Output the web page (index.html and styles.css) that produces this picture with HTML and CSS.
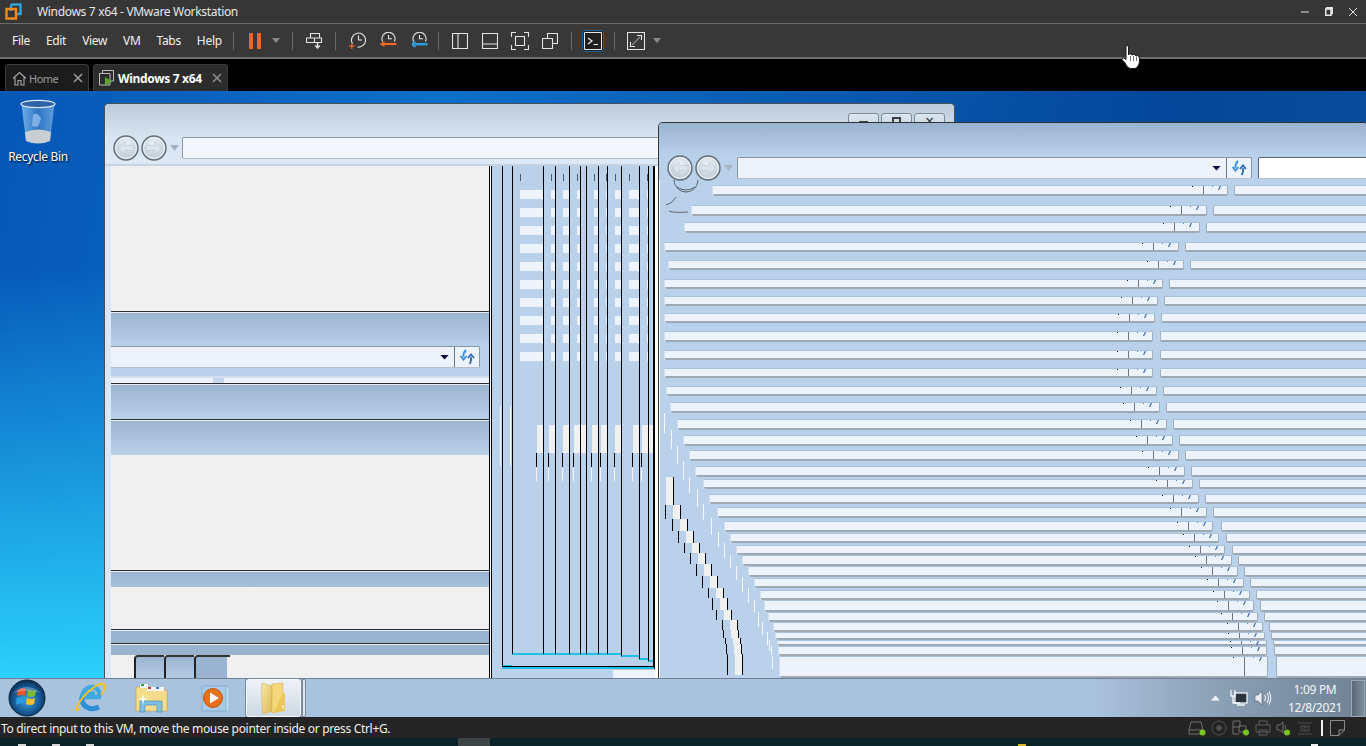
FILE: index.html
```html
<!DOCTYPE html>
<html lang="en">
<head>
    <meta charset="UTF-8">
    <title>Windows 7 x64 - VMware Workstation</title>
    <link rel="stylesheet" href="styles.css">
</head>
<body>
    <svg class="defs" width="0" height="0">
        <defs>
            <radialGradient id="navFill" cx="50%" cy="35%" r="70%">
                <stop offset="0" stop-color="#eef3f8"/>
                <stop offset="1" stop-color="#b4c2d0"/>
            </radialGradient>
            <radialGradient id="orbFill" cx="50%" cy="55%" r="55%">
                <stop offset="0" stop-color="#3fa4de"/>
                <stop offset="0.7" stop-color="#14558f"/>
                <stop offset="1" stop-color="#0c2c4c"/>
            </radialGradient>
            <linearGradient id="binFill" x1="0" y1="0" x2="1" y2="0">
                <stop offset="0" stop-color="#6fb0e8"/>
                <stop offset="0.5" stop-color="#2f74c4"/>
                <stop offset="1" stop-color="#5f9fdc"/>
            </linearGradient>
            <linearGradient id="folderFill" x1="0" y1="0" x2="1" y2="1">
                <stop offset="0" stop-color="#fbe9a8"/>
                <stop offset="1" stop-color="#d8b850"/>
            </linearGradient>
            <symbol id="navBtn" viewBox="0 0 26 26">
                <circle cx="13" cy="13" r="12" fill="url(#navFill)" stroke="#626c76" stroke-width="1.4"/>
                <circle cx="13" cy="13" r="10.4" fill="none" stroke="#f4f7fa" stroke-width="1"/>
                <path d="M5 13 L12 7 V10.5 H21 V15.5 H12 V19 Z" fill="#dbe4ec" stroke="#bac6d2" stroke-width=".6"/>
            </symbol>
            <symbol id="refresh" viewBox="0 0 16 16">
                <path d="M7 1 C5 3 4 5 4.5 8 M1.5 7 L4.5 10.5 L7.5 7" fill="none" stroke="#3a8fd8" stroke-width="1.8"/>
                <path d="M10.5 15 C12 13 12.5 11 12 8 M9 9 L12 5.5 L15 9" fill="none" stroke="#2b6cb8" stroke-width="1.8"/>
            </symbol>
        </defs>
    </svg>

    <header class="titlebar">
        <svg class="logo" width="17" height="17" viewBox="0 0 17 17">
            <path d="M6 1.5 H15.5 V11 H11" fill="none" stroke="#35a3dc" stroke-width="2.4"/>
            <path d="M6 8 V1.5" fill="none" stroke="#35a3dc" stroke-width="2.4"/>
            <path d="M1.5 6 H11 V15.5 H1.5 Z" fill="none" stroke="#f08a1c" stroke-width="2.4"/>
        </svg>
        <span class="app-title">Windows 7 x64 - VMware Workstation</span>
        <div class="win-controls">
            <svg width="8" height="10" viewBox="0 0 8 10"><path d="M0 5 H8" stroke="#e0e0e0" stroke-width="1"/></svg>
            <svg width="8" height="10" viewBox="0 0 8 10"><path d="M1.8 1.8 V.8 H7.2 V6.5 H6 M.8 2 H6 V8.2 H.8 Z" fill="none" stroke="#e8e8e8" stroke-width="1.5"/></svg>
            <svg width="8" height="10" viewBox="0 0 8 10"><path d="M0 1 L8 9 M8 1 L0 9" stroke="#e0e0e0" stroke-width="1"/></svg>
        </div>
    </header>

    <nav class="toolbar">
        <div class="menu">
            <span>File</span><span>Edit</span><span>View</span><span>VM</span><span>Tabs</span><span>Help</span>
        </div>
        <i class="sep"></i>
        <div class="tool pause ml6"><b></b><b></b></div>
        <i class="caret"></i>
        <i class="sep ml10"></i>
        <div class="tool w42">
            <svg width="18" height="18" viewBox="0 0 18 18" fill="none" stroke="#e4e4e4" stroke-width="1.1">
                <path d="M5.5 1.5 H14.5 V6 H5.5 Z M1.5 6 H9.5 V10.5 H1.5 Z M9.5 6 H16.5 V10.5 H9.5"/>
                <path d="M12.5 11 V15.5 M10.2 13.5 L12.5 16 L14.8 13.5" stroke-width="1.4"/>
            </svg>
        </div>
        <i class="sep"></i>
        <div class="tool w31 ml5">
            <svg width="18" height="18" viewBox="0 0 18 18" fill="none">
                <path d="M4.6 11.8 A7 7 0 1 1 9.5 15" stroke="#e4e4e4" stroke-width="1.1"/>
                <path d="M10.5 3.5 V8 H14" stroke="#e4e4e4" stroke-width="1.1"/>
                <path d="M3.8 11.5 V17 M1 14.2 H6.6" stroke="#f26522" stroke-width="1.3"/>
            </svg>
        </div>
        <div class="tool w31">
            <svg width="18" height="18" viewBox="0 0 18 18" fill="none">
                <path d="M3.6 9.5 A6.5 6.5 0 1 1 15.4 9.5" stroke="#e4e4e4" stroke-width="1.1"/>
                <path d="M9.5 3 V6.8 H13" stroke="#e4e4e4" stroke-width="1.1"/>
                <path d="M4 12 H17.5" stroke="#f26522" stroke-width="2.2"/>
                <path d="M0.5 12 L5.5 9 V15 Z" fill="#f26522"/>
            </svg>
        </div>
        <div class="tool w31">
            <svg width="18" height="18" viewBox="0 0 18 18" fill="none">
                <path d="M3.6 9.5 A6.5 6.5 0 1 1 15.4 9.5" stroke="#e4e4e4" stroke-width="1.1"/>
                <path d="M9.5 3 V6.8 H13" stroke="#e4e4e4" stroke-width="1.1"/>
                <path d="M5 12.2 H17.5" stroke="#2f9fe0" stroke-width="2.4"/>
                <path d="M6 9.5 A3 3 0 1 0 6 15 L4.5 12.2 Z" fill="#2f9fe0"/>
            </svg>
        </div>
        <i class="sep ml4"></i>
        <div class="tool w30 ml6">
            <svg width="16" height="16" viewBox="0 0 16 16" fill="none" stroke="#e4e4e4" stroke-width="1.1"><path d="M.5 .5 H15.5 V15.5 H.5 Z M6 .5 V15.5"/></svg>
        </div>
        <div class="tool w30">
            <svg width="16" height="16" viewBox="0 0 16 16" fill="none" stroke="#e4e4e4" stroke-width="1.1"><path d="M.5 .5 H15.5 V15.5 H.5 Z M.5 11 H15.5"/></svg>
        </div>
        <div class="tool w30">
            <svg width="18" height="18" viewBox="0 0 18 18" fill="none" stroke="#e4e4e4" stroke-width="1.1"><path d="M.5 5 V.5 H5 M13 .5 H17.5 V5 M17.5 13 V17.5 H13 M5 17.5 H.5 V13 M4.5 4.5 H13.5 V13.5 H4.5 Z"/></svg>
        </div>
        <div class="tool w30">
            <svg width="16" height="16" viewBox="0 0 16 16" fill="none" stroke="#e4e4e4" stroke-width="1.1"><path d="M5.5 5.5 V.5 H15.5 V10.5 H10.5 M.5 5.5 H10.5 V15.5 H.5 Z"/></svg>
        </div>
        <i class="sep ml6"></i>
        <div class="tool console ml10">
            <svg width="18" height="18" viewBox="0 0 18 18" fill="none" stroke="#e8e8e8"><path d="M.5 .5 H17.5 V17.5 H.5 Z" stroke-width="1"/><path d="M4 6 L8 9 L4 12" stroke-width="1.3"/><path d="M9.5 12.5 H14" stroke-width="1.1"/></svg>
        </div>
        <i class="sep ml10"></i>
        <div class="tool w30 ml6">
            <svg width="18" height="18" viewBox="0 0 18 18" fill="none" stroke="#e4e4e4" stroke-width="1.1"><path d="M.5 .5 H17.5 V17.5 H.5 Z"/><path d="M3.5 10 V14.5 H8 M10 3.5 H14.5 V8"/><path d="M5 13 L13 5" stroke="#8c8c8c"/></svg>
        </div>
        <i class="caret"></i>
    </nav>

    <div class="tabstrip">
        <div class="tab tab-home">
            <svg width="15" height="15" viewBox="0 0 15 15" fill="none" stroke="#a8a8a8" stroke-width="1.1"><path d="M1 7.5 L7.5 1.5 L14 7.5 M3 6.5 V14 H6 V9.5 H9 V14 H12 V6.5"/></svg>
            <span>Home</span>
            <svg class="tab-x" width="10" height="10" viewBox="0 0 10 10"><path d="M1 1 L9 9 M9 1 L1 9" stroke="#9a9a9a" stroke-width="1.6"/></svg>
        </div>
        <div class="tab tab-active">
            <svg width="15" height="16" viewBox="0 0 15 16" fill="none"><path d="M3.5 3.5 V.5 H14.5 V11 H12 M.5 3.5 H11 V15 H.5 Z" stroke="#bdbdbd"/><path d="M6 7 L13 11.5 L6 16 Z" fill="#5fa62c"/></svg>
            <span>Windows 7 x64</span>
            <svg class="tab-x" width="10" height="10" viewBox="0 0 10 10"><path d="M1 1 L9 9 M9 1 L1 9" stroke="#8c8c8c" stroke-width="1.6"/></svg>
        </div>
    </div>

    <main class="desktop">
        <div class="desk-icon">
            <svg width="36" height="46" viewBox="0 0 36 46">
                <path d="M1.5 5 L6 42 Q18 47 30 42 L34.5 5 Z" fill="url(#binFill)"/>
                <path d="M5 33 Q18 28 31 33 L30 42 Q18 47 6 42 Z" fill="#c8ced4"/>
                <path d="M13 16 Q18 12 21 20 L18 28 L12 27 Z" fill="#9cc6ee" opacity=".7"/>
                <ellipse cx="18" cy="5" rx="17" ry="3.6" fill="#2e64a6" stroke="#dfe5ec" stroke-width="1.3"/>
            </svg>
            <span>Recycle Bin</span>
        </div>

        <section class="win win-back">
            <div class="win-head">
                <div class="caption">
                    <div class="cap-btn"><i class="cap-min"></i></div>
                    <div class="cap-btn"><i class="cap-max"></i></div>
                    <div class="cap-btn cap-close"><span>×</span></div>
                </div>
                <div class="nav">
                    <svg class="nav-btn" width="26" height="26"><use href="#navBtn"/></svg>
                    <svg class="nav-btn flip" width="26" height="26"><use href="#navBtn"/></svg>
                    <i class="nav-drop"></i>
                    <div class="nav-field"></div>
                </div>
            </div>
            <div class="win-body">
                <div class="pane">
                    <div class="blank blank-a"></div>
                    <div class="band band-a"></div>
                    <div class="addr-row">
                        <div class="addr-field"><i class="drop"></i><div class="addr-go"><svg width="16" height="16"><use href="#refresh"/></svg></div></div>
                    </div>
                    <div class="scrap"></div>
                    <div class="band band-b"></div>
                    <div class="band band-b"></div>
                    <div class="blank blank-b"></div>
                    <div class="band band-c"></div>
                    <div class="blank blank-c"></div>
                    <div class="band band-d"></div>
                    <div class="band band-e"></div>
                    <div class="blank blank-d">
                        <div class="mini-tab"></div>
                        <div class="mini-tab"></div>
                        <div class="mini-tab mini-last"></div>
                    </div>
                </div>
                <div class="stripes" id="stripes">
                    <div class="stripes-rule"></div>
                    <div class="stripes-foot"></div>
                </div>
            </div>
        </section>

        <section class="win win-front">
            <div class="win-head head-front">
                <div class="nav nav-front">
                    <svg class="nav-btn" width="26" height="26"><use href="#navBtn"/></svg>
                    <svg class="nav-btn flip" width="26" height="26"><use href="#navBtn"/></svg>
                    <i class="nav-drop"></i>
                    <div class="nav-addr">
                        <i class="drop"></i>
                        <div class="addr-go"><svg width="16" height="16"><use href="#refresh"/></svg></div>
                    </div>
                    <div class="nav-search"></div>
                </div>
            </div>
            <div class="trail" id="trail">
                <svg class="orb-ghost" width="50" height="40" viewBox="0 0 50 40" fill="none" stroke="#5d6670">
                    <path d="M8 0 A12 12 0 0 0 32 0 M11 7 Q20 13 29 7"/>
                    <path d="M0 25 Q6 24 10 17 M3 31 Q8 33 22 32"/>
                </svg>
            </div>
        </section>
    </main>

    <footer class="taskbar">
        <div class="start">
            <svg width="38" height="38" viewBox="0 0 38 38">
                <circle cx="19" cy="19" r="18" fill="url(#orbFill)" stroke="#0a2038"/>
                <path d="M18 10 Q14 8 10 11 L9 17 Q14 15 17 17 Z" fill="#e8552a"/>
                <path d="M20 10.5 Q24 13 28 11 L27 17 Q23 19 19 17 Z" fill="#7fba2a"/>
                <path d="M8.5 19 Q13 17 17 19 L16 25 Q12 23 8 26 Z" fill="#2d9be0"/>
                <path d="M19 19 Q23 21 27 19 L26 25 Q22 27 18 25 Z" fill="#f3c01c"/>
                <path d="M5 14 Q19 2 33 14 Q19 10 5 14 Z" fill="#fff" opacity=".25"/>
            </svg>
        </div>
        <div class="pin pin-ie">
            <svg width="34" height="34" viewBox="0 0 34 34" fill="none">
                <path d="M22 7 C16 4 9 8 8 16 H25 C26 11 25 9 22 7 Z M11 12.5 H21" fill="none" stroke="#3fa9e4" stroke-width="4.5"/>
                <path d="M8 16 C7 24 15 31 25 26" stroke="#2f8fd4" stroke-width="5"/>
                <path d="M5 28 C0 32 2 25 10 15 C17 7 27 1 30 3 C33 5 30 10 27 14" stroke="#f4c21e" stroke-width="2"/>
            </svg>
        </div>
        <div class="pin pin-files">
            <svg width="34" height="34" viewBox="0 0 34 34">
                <path d="M1 6 H13 L15 9 H32 V30 H1 Z" fill="#f5dc8c" stroke="#c0a050" stroke-width=".6"/>
                <rect x="5" y="3" width="8" height="4" fill="#f4f4f4"/><rect x="6" y="3" width="3" height="2" fill="#3aa53a"/>
                <rect x="12" y="6" width="8" height="4" fill="#f4f4f4"/><rect x="13" y="6" width="3" height="2" fill="#c8352a"/>
                <rect x="20" y="6" width="9" height="4" fill="#f4f4f4"/><rect x="21" y="6" width="3" height="2" fill="#2a7fd0"/>
                <path d="M5 20 H27 V31 H22 V24 H10 V31 H5 Z" fill="#7ec0e4" stroke="#4a90bc" stroke-width=".7"/>
                <path d="M8 13 L9 17 L13 18 L9 19 L8 24 L7 19 L3 18 L7 17 Z" fill="#fff"/>
            </svg>
        </div>
        <div class="pin pin-media">
            <svg width="34" height="34" viewBox="0 0 34 34">
                <rect x="20" y="6" width="11" height="24" fill="#c4dcf0" stroke="#8fb4d4" stroke-width=".7"/>
                <rect x="4" y="5" width="24" height="25" fill="#a8cce8" stroke="#7aa4c8" stroke-width=".7"/>
                <circle cx="15" cy="17" r="9.5" fill="#e8701e" stroke="#c05610"/>
                <path d="M12 11.5 L21 17 L12 22.5 Z" fill="#fff"/>
            </svg>
        </div>
        <div class="pin-active">
            <div class="pin-folder">
                <svg width="32" height="34" viewBox="0 0 32 34">
                    <path d="M4 2 L14 5 V30 L5 33 Q3 20 4 2 Z" fill="url(#folderFill)" stroke="#c8a850" stroke-width=".5"/>
                    <path d="M14 3 L25 2 V28 L14 32 Z" fill="#f3d97c" stroke="#c8a850" stroke-width=".5"/>
                    <path d="M25 12 L27 12 V30 L15 32 Z" fill="#e9c75c"/>
                    <path d="M25 24 V28" stroke="#fff" stroke-width="1"/>
                </svg>
            </div>
            <div class="pin-stack"></div>
        </div>
        <div class="tray">
            <i class="tray-up"></i>
            <svg class="tray-net" width="18" height="18" viewBox="0 0 18 18">
                <rect x="5" y="4" width="12" height="10" fill="#2a3440" stroke="#f2f4f6" stroke-width="1.3"/>
                <path d="M1 1 V7 H5 V1 M3 7 V14 H10 M7 16 H15" fill="none" stroke="#f2f4f6" stroke-width="1.3"/>
            </svg>
            <svg class="tray-vol" width="18" height="18" viewBox="0 0 18 18" fill="none">
                <path d="M1 6 H4 L8 2 V16 L4 12 H1 Z" fill="#e8ecf0" stroke="#5a6672" stroke-width=".7"/>
                <path d="M10.5 6 Q12.5 9 10.5 12 M13 4 Q16 9 13 14 M15 2.5 Q18.5 9 15 15.5" stroke="#eef1f4" stroke-width="1.1"/>
            </svg>
            <div class="clock"><span>1:09 PM</span><span>12/8/2021</span></div>
            <div class="show-desktop"></div>
        </div>
    </footer>

    <div class="statusbar">
        <span class="hint">To direct input to this VM, move the mouse pointer inside or press Ctrl+G.</span>
        <div class="devices">
            <svg width="18" height="16" viewBox="0 0 18 16" fill="none" stroke="#6e6e6e"><path d="M1 10 L3 2 H13 L15 10 V14 H1 Z M1 10 H15"/><circle cx="14.5" cy="12.5" r="3" fill="#7ac51e" stroke="none"/></svg>
            <svg width="16" height="16" viewBox="0 0 16 16" fill="none" stroke="#4e4e4e"><circle cx="8" cy="8" r="7"/><circle cx="8" cy="8" r="2.4" fill="#4e4e4e"/></svg>
            <svg width="18" height="16" viewBox="0 0 18 16" fill="none" stroke="#6e6e6e"><path d="M1 1 H8 V7 H1 Z M7 6 H14 V12 H7 Z M1 7 V14 H7"/><circle cx="14" cy="12.5" r="3" fill="#7ac51e" stroke="none"/></svg>
            <svg width="16" height="16" viewBox="0 0 16 16" fill="none" stroke="#5e5e5e"><path d="M4 5 V1 H12 V5 M1 5 H15 V12 H1 Z M4 10 H12 V15 H4 Z"/></svg>
            <svg width="16" height="16" viewBox="0 0 16 16" fill="none" stroke="#6e6e6e"><path d="M1 5 H4 L7 2 V13 L4 10 H1 Z M9 5 Q10 7 9 9"/><circle cx="11" cy="12.5" r="3" fill="#7ac51e" stroke="none"/></svg>
            <svg width="16" height="16" viewBox="0 0 16 16" fill="none" stroke="#4e4e4e"><path d="M1 3 H15 M1 14 H15 M4 6 H12 V11 H4 Z"/><circle cx="8" cy="8.5" r="1.5"/></svg>
            <i class="dev-bar"></i>
            <svg width="15" height="16" viewBox="0 0 15 16" fill="none" stroke="#8a8a8a"><path d="M.5 .5 H14.5 V10 L9 15.5 H.5 Z M9 15.5 V10 H14.5"/></svg>
        </div>
    </div>
    <div class="underlap">
        <i class="bit bit-a"></i><i class="bit bit-b"></i><i class="bit bit-c"></i><i class="bit bit-d"></i><i class="bit bit-e"></i><i class="bit bit-f"></i>
    </div>

    <svg class="pointer" width="24" height="26" viewBox="0 0 24 26">
        <path d="M6 1.5 Q8 .5 8.5 3 V11 L10 9.5 L12 11 L14 10 L16 12 L18 11.5 Q20 13 19.5 17 Q19 23 15 24.5 H10 Q7 23.5 5 19 L2 15.5 Q2 13.5 4 14 L6 15.5 Z" fill="#fff" stroke="#1a1a1a" stroke-width="1"/>
        <path d="M10.5 12 V17 M13.5 12 V17 M16.5 13 V17" stroke="#555" stroke-width=".8"/>
    </svg>

    <script src="trail.js"></script>
</body>
</html>
```

FILE: styles.css
```css
* {
    box-sizing: border-box;
}

html, body {
    margin: 0;
    width: 1366px;
    height: 746px;
    overflow: hidden;
}

body {
    position: relative;
    display: flex;
    flex-direction: column;
    font-family: "Noto Sans", "Open Sans", sans-serif;
    font-size: 12px;
    letter-spacing: -.32px;
    background: #000;
    color: #eee;
}

i {
    display: block;
}

.defs {
    position: absolute;
}

.pointer {
    position: absolute;
    left: 1120px;
    top: 44px;
}

/* app chrome */
.titlebar {
    height: 24px;
    flex: none;
    display: flex;
    align-items: center;
    background: #363636;
    border-bottom: 1px solid #6c6c6c;
    padding-left: 5px;
}

.app-title {
    margin-left: 15px;
    color: #e6e6e6;
}

.win-controls {
    margin-left: auto;
    display: flex;
    gap: 16px;
    margin-right: 9px;
    align-items: center;
}

.toolbar {
    height: 35px;
    flex: none;
    display: flex;
    align-items: center;
    background: #383838;
    border-bottom: 2px solid #6e6e6e;
    padding-left: 12px;
}

.menu {
    width: 221px;
    display: flex;
    gap: 16px;
    color: #f0f0f0;
}

.sep {
    width: 1px;
    height: 18px;
    background: #6a6a6a;
}

.tool {
    height: 22px;
    display: flex;
    align-items: center;
    justify-content: center;
}

.w30 { width: 30px; }
.w31 { width: 31px; }
.w42 { width: 42px; }
.ml4 { margin-left: 4px; }
.ml5 { margin-left: 5px; }
.ml6 { margin-left: 6px; }
.ml10 { margin-left: 10px; }

.pause {
    width: 30px;
    gap: 4px;
}

.pause b {
    width: 4px;
    height: 16px;
    background: #f26522;
}

.caret {
    width: 12px;
    height: 5px;
    background: #8a8a8a;
    clip-path: polygon(2px 0, 10px 0, 6px 100%);
}

.console {
    width: 22px;
    background: #1f1f1f;
    border: 1px solid #1d5f96;
    border-radius: 3px;
}

.tabstrip {
    height: 32px;
    flex: none;
    background: #000;
    display: flex;
    align-items: flex-end;
    padding-left: 5px;
    gap: 4px;
}

.tab {
    height: 27px;
    display: flex;
    align-items: center;
    gap: 4px;
    border: 1px solid #3a3a3a;
    border-bottom: none;
    border-radius: 4px 4px 0 0;
    padding-left: 6px;
}

.tab-home {
    width: 84px;
    background: #1c1c1c;
    color: #9a9a9a;
    font-size: 11px;
    letter-spacing: -.5px;
    gap: 2px;
}

.tab-active {
    width: 135px;
    background: #2c2c2c;
    color: #fff;
    font-weight: 700;
    padding-left: 5px;
}

.tab-x {
    margin-left: auto;
    margin-right: 5px;
}

/* guest desktop */
.desktop {
    position: relative;
    height: 587px;
    flex: none;
    overflow: hidden;
    background:
        linear-gradient(180deg, rgba(4, 74, 170, 0) 30%, #2ad0fc 100%),
        linear-gradient(100deg, #0557b8 0, #0d6fc8 30%, #04479a 80%, #0b4f9e 100%);
}

.desk-icon {
    position: absolute;
    left: 8px;
    top: 8px;
    width: 60px;
    display: flex;
    flex-direction: column;
    align-items: center;
    gap: 3px;
    color: #fff;
    text-shadow: 1px 1px 2px #000;
    white-space: nowrap;
}

.win {
    position: absolute;
    overflow: hidden;
    border: 1px solid #4a5058;
    border-bottom: none;
    border-radius: 5px 5px 0 0;
}

.win-back {
    left: 104px;
    top: 12px;
    width: 851px;
    height: 575px;
    background: #dbe7f5;
}

.win-front {
    left: 658px;
    top: 31px;
    width: 710px;
    height: 556px;
    background: #b9d1ea;
    border-color: #333;
    box-shadow: inset 1px 0 #f4f7fb;
}

.win-head {
    height: 62px;
    background: linear-gradient(#bccbd9, #d7e4f2 55%, #dde9f6);
    border-bottom: 2px solid #c4d2e2;
    position: relative;
}

.caption {
    display: flex;
    justify-content: flex-end;
    gap: 2px;
    padding: 9px 9px 0 0;
}

.cap-btn {
    width: 31px;
    height: 20px;
    border: 1px solid #7d8a98;
    border-radius: 3px;
    background: linear-gradient(#dce6f0, #c3d0de);
    display: flex;
    justify-content: center;
    padding-top: 3px;
}

.cap-close {
    color: #3a4048;
    font-size: 16px;
    line-height: 9px;
}

.cap-min {
    width: 9px;
    height: 2px;
    margin-top: 4px;
    background: #3a4048;
}

.cap-max {
    width: 9px;
    height: 7px;
    border: 2px solid #3a4048;
}

.nav {
    position: absolute;
    left: 8px;
    top: 31px;
    right: 0;
    height: 26px;
    display: flex;
    align-items: center;
    gap: 2px;
}

.nav-btn {
    flex: none;
}

.flip {
    transform: scaleX(-1);
}

.nav-drop {
    width: 9px;
    height: 6px;
    margin: 0 1px 0 1px;
    flex: none;
    background: #a6b4c2;
    clip-path: polygon(0 0, 100% 0, 50% 100%);
}

.nav-field {
    flex: 1;
    height: 22px;
    background: #f4f8fc;
    border: 1px solid #8a96a2;
    border-bottom-color: #b4bec8;
    border-radius: 2px;
}

.win-body {
    height: 512px;
    display: flex;
    padding-left: 6px;
}

/* left pane of the back window */
.pane {
    width: 379px;
    flex: none;
    display: flex;
    flex-direction: column;
    background: #f0f0f0;
    border-right: 1px solid #000;
}

.blank-a { height: 145px; }
.blank-b { height: 115px; }
.blank-c { height: 42px; }

.blank-d {
    flex: 1;
    display: flex;
    padding-left: 23px;
    align-items: flex-end;
}

.band {
    background: linear-gradient(#9ab3d0, #b9d1ea);
    border-top: 1px solid #2e2e2e;
    box-shadow: inset 0 1px #e8eef6;
}

.band-a { height: 35px; }
.band-b { height: 36px; }

.band-c {
    height: 17px;
    background: linear-gradient(#9ab3d0, #a6bfdb);
}

.band-d {
    height: 14px;
    background: #9ab3d0;
}

.band-e {
    height: 12px;
    background: #9ab3d0;
}

.addr-row {
    height: 30px;
    background: #b9d1ea;
    padding: 0 9px 8px 0;
}

.addr-field {
    height: 22px;
    display: flex;
    align-items: center;
    justify-content: flex-end;
    background: #edf3fb;
    border: 1px solid #8a96a2;
    border-left: none;
    border-bottom-color: #b4bec8;
    border-radius: 0 2px 2px 0;
}

.drop {
    width: 9px;
    height: 5px;
    margin-right: 5px;
    flex: none;
    background: #0a0a3c;
    clip-path: polygon(0 0, 100% 0, 50% 100%);
}

.addr-go {
    width: 25px;
    height: 100%;
    flex: none;
    display: flex;
    align-items: center;
    justify-content: center;
    border-left: 1px solid #6e7884;
}

.scrap {
    height: 7px;
    background: linear-gradient(90deg, #eef3fb 0 27%, #c4d6ec 27% 30%, #eef3fb 30%);
    border-top: 2px solid #d4e0ef;
}

.mini-tab {
    width: 30px;
    height: 23px;
    background: linear-gradient(#9ab3d0, #b4cce6);
    border-left: 2px solid #222;
    border-top: 2px solid #333;
    border-top-left-radius: 4px;
}

.mini-last {
    width: 36px;
    background: linear-gradient(90deg, #9ab3d0 0 90%, #f0f0f0 90%);
}

/* smeared window edges */
.stripes {
    position: relative;
    width: 168px;
    flex: none;
    display: flex;
    align-items: flex-start;
    background: #b9d1ea;
    border-left: 1px solid #fff;
}

.stripe {
    flex: none;
    border-left: 1px solid #000;
    border-bottom: 2px solid #1cc0e4;
    background:
        linear-gradient(#4a5a70, #4a5a70) left 7px top 8px / 1px 7px no-repeat,
        linear-gradient(#f0f0f0, #f0f0f0) right 0 top 259px / 6px 28px no-repeat,
        linear-gradient(#000, #000) right 6px top 287px / 1px 14px no-repeat,
        linear-gradient(#f4f7fb, #f4f7fb) right 6px top 302px / 1px 13px no-repeat,
        repeating-linear-gradient(#b9d1ea 0 9px, #edf3fb 9px 18px) right 0 top 15px / calc(100% - 7px) 180px no-repeat,
        #b9d1ea;
}

.stripe:nth-child(-n+2) {
    background:
        linear-gradient(#f4f7fb, #f4f7fb) right 1px top 240px / 1px 60px no-repeat,
        #b9d1ea;
}

.stripe:first-child {
    border-bottom: none;
}

.stripe:nth-child(14) {
    border-left-width: 2px;
    border-bottom: none;
    background: #fff;
}

.stripes-rule {
    position: absolute;
    left: 11px;
    top: 500px;
    width: 152px;
    height: 3px;
    background: #1cc0e4;
    border-top: 1px solid #000;
}

.stripes-foot {
    position: absolute;
    left: 122px;
    bottom: 0;
    width: 42px;
    height: 9px;
    background: #edf3fb;
    border-top: 1px solid #bcc8d6;
}

/* front window */
.head-front {
    height: 57px;
    background: linear-gradient(#9ab3d0, #b9d1ea 58%);
    border: none;
}

.nav-front {
    left: 8px;
    top: 32px;
}

.nav-addr {
    width: 515px;
    height: 22px;
    margin-left: 1px;
    display: flex;
    align-items: center;
    justify-content: flex-end;
    background: #edf3fb;
    border: 1px solid #8a96a2;
    border-bottom-color: #b4bec8;
    border-radius: 2px;
}

.nav-search {
    flex: 1;
    height: 22px;
    margin-left: 4px;
    background: #fff;
    border: 1px solid #5e6670;
    border-bottom-color: #b4bec8;
    border-radius: 2px 0 0 2px;
}

.trail {
    position: relative;
    padding-top: 6px;
}

.orb-ghost {
    position: absolute;
    left: 7px;
    top: 0;
    z-index: 1;
}

.row {
    position: relative;
    display: flex;
    align-items: flex-start;
}

.row-addr {
    flex: none;
    display: flex;
    background: #edf3fb;
    border-bottom: 2px solid #9ea9b6;
    border-radius: 0 0 2px 2px;
    box-shadow: -1px 0 #d4e0ef, 0 -1px #a9c2de;
}

.row-main {
    position: relative;
    flex: 1;
}

.row-main::after {
    content: "";
    position: absolute;
    right: 10px;
    top: 0;
    width: 1px;
    height: 1px;
    background: #111;
}

.row-btn {
    position: relative;
    flex: none;
    border-left: 1px solid #6e7884;
    border-right: 1px solid #a4aeba;
}

.row-btn::before {
    content: "";
    position: absolute;
    left: 14px;
    top: 0;
    width: 3px;
    height: 4px;
    background: #2b5fb0;
    clip-path: polygon(60% 0, 100% 0, 40% 100%, 0 100%);
}

.row-btn::after {
    content: "";
    position: absolute;
    left: 8px;
    top: 0;
    width: 1px;
    height: 1px;
    background: #3a8fd8;
}

.row-search {
    flex: 1;
    background: #edf3fb;
    border-bottom: 2px solid #9ea9b6;
    border-left: 1px solid #a4aeba;
    border-radius: 0 0 0 2px;
    box-shadow: 0 -1px #a9c2de;
}

.tick {
    position: absolute;
    width: 1px;
    background: #f6f9fc;
}

.ghost {
    position: absolute;
    top: -3px;
    width: 16px;
    height: 100%;
    border-left: 1px solid #000;
    background: linear-gradient(90deg, transparent 7px, #f0f0f0 7px 14px, #000 14px);
}

/* guest taskbar */
.taskbar {
    height: 39px;
    flex: none;
    display: flex;
    align-items: center;
    background: linear-gradient(90deg, #a9c2de 0, #a9c2de 80%, #8ea4ba 88%, #6f8294 100%);
    border-top: 1px solid #6f8095;
    padding-left: 8px;
}

.start {
    width: 38px;
    height: 38px;
    flex: none;
}

.pin {
    width: 60px;
    display: flex;
    justify-content: center;
    flex: none;
}

.pin-ie { margin-left: 15px; }
.pin-files { margin-left: 1px; }
.pin-media { margin-left: 3px; }

.pin-active {
    display: flex;
    height: 38px;
    margin-left: 1px;
    flex: none;
}

.pin-folder {
    width: 55px;
    height: 38px;
    display: flex;
    justify-content: center;
    align-items: center;
    background: linear-gradient(#eef2f6, #cdd8e4);
    border: 1px solid #f4f7fa;
    border-radius: 3px;
    box-shadow: 0 0 0 1px #7a8a9c;
}

.pin-stack {
    width: 4px;
    margin-left: 1px;
    background: #dde5ee;
    border: 1px solid #7a8a9c;
    border-radius: 0 2px 2px 0;
}

.tray {
    margin-left: auto;
    display: flex;
    align-items: center;
    height: 100%;
}

.tray-up {
    width: 9px;
    height: 5px;
    background: #f2f4f6;
    clip-path: polygon(50% 0, 100% 100%, 0 100%);
}

.tray-net { margin-left: 10px; }
.tray-vol { margin-left: 6px; }

.clock {
    width: 62px;
    margin-left: 12px;
    display: flex;
    flex-direction: column;
    align-items: center;
    gap: 1px;
    line-height: 17px;
    color: #f4f6f8;
}

.show-desktop {
    width: 14px;
    height: 37px;
    margin-left: 5px;
    margin-right: 1px;
    border: 1px solid #9aa8b6;
    background: linear-gradient(90deg, #5a6876, #7f8e9c);
}

/* vmware status bar */
.statusbar {
    height: 21px;
    flex: none;
    display: flex;
    align-items: center;
    background: #242424;
    padding: 1px 0 0 1px;
}

.hint {
    color: #f0f0f0;
}

.devices {
    margin-left: auto;
    margin-right: 21px;
    display: flex;
    align-items: center;
    gap: 5px;
}

.dev-bar {
    width: 2px;
    height: 16px;
    background: #f2f2f2;
    margin: 0 2px 0 3px;
}

.underlap {
    flex: 1;
    display: flex;
    align-items: flex-end;
    background: #0a2329;
}

.bit {
    height: 2px;
    background: #d8d8d8;
}

.bit-a { width: 8px; margin-left: 18px; }
.bit-b { width: 8px; margin-left: 26px; }
.bit-c { width: 8px; margin-left: 26px; }
.bit-d { width: 32px; height: 8px; margin-left: 364px; background: #3c4446; }
.bit-e { width: 8px; margin-left: 528px; background: #d8b820; }
.bit-f { width: 7px; margin-left: 285px; background: #f0f0f0; }
```

FILE: trail.js
```js
// black edge x and where it stops, left window smear
const stripeCols = [
    [491, 678], [502, 667], [512, 655], [543, 655], [555, 655], [569, 655], [580, 655],
    [586, 655], [598, 655], [607, 655], [621, 657], [639, 660], [648, 662], [653, 678]
];

// y, height, field left, divider, button end, search left, ghost x
const trailRows = [
    [186, 10, 713, 1203, 1228, 1234],
    [206, 10, 692, 1181, 1207, 1213],
    [223, 10, 685, 1174, 1200, 1206],
    [243, 9, 665, 1153, 1179, 1185],
    [261, 9, 669, 1158, 1184, 1190],
    [280, 9, 665, 1138, 1163, 1169],
    [297, 9, 665, 1132, 1158, 1164],
    [314, 9, 665, 1129, 1155, 1161],
    [332, 10, 665, 1128, 1153, 1160],
    [351, 9, 665, 1128, 1153, 1160],
    [369, 9, 665, 1128, 1153, 1160],
    [387, 9, 667, 1131, 1157, 1163],
    [403, 10, 671, 1134, 1160, 1166],
    [420, 10, 678, 1141, 1167, 1173],
    [436, 10, 684, 1147, 1173, 1179],
    [451, 10, 690, 1153, 1179, 1185],
    [467, 10, 696, 1159, 1185, 1191],
    [480, 9, 704, 1167, 1193, 1199, 658],
    [495, 9, 710, 1173, 1199, 1205, 658],
    [508, 10, 718, 1181, 1207, 1213, 665],
    [522, 10, 725, 1188, 1213, 1221, 672],
    [534, 9, 731, 1194, 1219, 1226, 678],
    [546, 9, 737, 1200, 1225, 1232, 684],
    [556, 10, 743, 1206, 1232, 1238, 690],
    [567, 10, 749, 1212, 1238, 1244, 696],
    [579, 9, 755, 1218, 1244, 1250, 702],
    [591, 9, 761, 1224, 1250, 1256, 708],
    [601, 11, 765, 1228, 1254, 1260, 712],
    [613, 9, 769, 1232, 1258, 1264, 716],
    [623, 9, 774, 1238, 1263, 1269, 722],
    [633, 7, 776, 1239, 1265, 1271, 723],
    [641, 5, 778, 1241, 1267, 1273, 725],
    [647, 9, 779, 1242, 1267, 1274, 726],
    [657, 21, 780, 1244, 1268, 1276, 727]
];

const WIN_X = 659;

const stripes = document.getElementById("stripes");
const stripesRule = stripes.querySelector(".stripes-rule");
stripeCols.forEach((col, i) => {
    const next = i + 1 < stripeCols.length ? stripeCols[i + 1][0] : 658;
    const el = document.createElement("div");
    el.className = "stripe";
    el.style.width = (next - col[0]) + "px";
    el.style.height = (col[1] - 166) + "px";
    stripes.insertBefore(el, stripesRule);
});

const trail = document.getElementById("trail");
trailRows.forEach((r, i) => {
    const [y, h, left, div, end, search, ghostX] = r;
    const nextY = i + 1 < trailRows.length ? trailRows[i + 1][0] : 678;

    const row = document.createElement("div");
    row.className = "row";
    row.style.height = (nextY - y) + "px";
    row.style.paddingLeft = (left - WIN_X) + "px";

    const addr = document.createElement("div");
    addr.className = "row-addr";
    addr.style.width = (end - left) + "px";
    addr.style.height = h + "px";
    addr.innerHTML = '<div class="row-main"></div><div class="row-btn" style="width:' + (end - div) + 'px"></div>';

    const box = document.createElement("div");
    box.className = "row-search";
    box.style.marginLeft = (search - end) + "px";
    box.style.height = h + "px";

    row.append(addr, box);

    if (y >= 403) {
        const tick = document.createElement("i");
        tick.className = "tick";
        tick.style.left = (left - 7 - WIN_X) + "px";
        tick.style.top = h + "px";
        tick.style.height = (nextY - y + 3) + "px";
        row.append(tick);
    }
    if (ghostX) {
        const ghost = document.createElement("i");
        ghost.className = "ghost";
        ghost.style.left = (ghostX - WIN_X) + "px";
        row.append(ghost);
    }
    trail.append(row);
});
```
